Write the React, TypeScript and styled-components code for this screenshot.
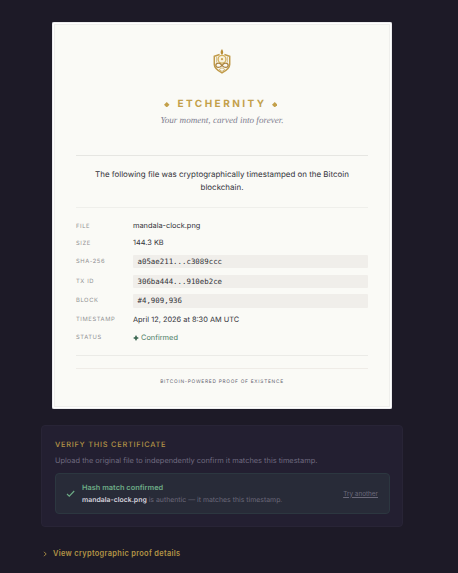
import styled, { createGlobalStyle } from 'styled-components';

const GlobalStyle = createGlobalStyle`
  * {
    box-sizing: border-box;
  }

  body {
    margin: 0;
    background: #1d1a27;
    font-family: 'Inter', sans-serif;
    text-rendering: geometricPrecision;
  }
`;

const Page = styled.main`
  display: flex;
  flex-direction: column;
  align-items: center;
  height: 573px;
  padding: 21.5px 14px 0 0;
  overflow: hidden;
  background: #1d1a27;
`;

const Certificate = styled.article`
  width: 340px;
  height: 387px;
  padding: 2px;
  border-radius: 2px;
  background: #fff;
  box-shadow: inset 0 0 0 0.5px #d9d9dc;
`;

const CertificateInner = styled.div`
  display: flex;
  flex-direction: column;
  height: 100%;
  padding: 0 21px;
  border: 1px solid #efefec;
  background: #fafaf6;
`;

const Header = styled.header`
  display: flex;
  flex-direction: column;
  align-items: center;
  height: 131px;
  padding-top: 24px;
  border-bottom: 1px solid #e6e6e2;
`;

const BrandName = styled.h1`
  display: flex;
  align-items: center;
  gap: 8px;
  height: 14px;
  margin: 23px 0 0;
  padding-right: 2.5px;
  color: #c3a04a;
  font-size: 10px;
  font-weight: 700;
  line-height: 14px;
  letter-spacing: 2.45px;

  span {
    margin-right: -2.5px;
  }

  svg {
    margin-top: 2px;
  }
`;

const Tagline = styled.p`
  margin: 3px 0 0;
  color: #7f7e90;
  font-family: 'Liberation Serif', serif;
  font-size: 9.1px;
  font-style: italic;
  line-height: 12px;
`;

const Statement = styled.p`
  height: 52px;
  margin: 0;
  padding: 12.5px 16px 0;
  border-bottom: 1px solid #efefeb;
  color: #33333a;
  font-size: 7.95px;
  line-height: 13px;
  text-align: center;
`;

const Details = styled.dl`
  height: 148px;
  margin: 0;
  padding-top: 10px;
  border-bottom: 1px solid #ebebe7;
`;

const DetailRow = styled.div<{ $height: number }>`
  display: grid;
  grid-template-columns: 57px 1fr;
  align-items: center;
  height: ${({ $height }) => $height}px;

  dt {
    padding-top: 1px;
    color: #8f8f92;
    font-size: 5.8px;
    line-height: 8px;
    letter-spacing: 0.6px;
  }

  dd {
    margin: 0;
    color: #33333a;
    font-size: 7.4px;
    line-height: 10px;
  }
`;

const Value = styled.span`
  display: block;
`;

const Code = styled.code`
  display: block;
  height: 13.5px;
  padding-left: 4.5px;
  border-radius: 1px;
  background: #f0eeea;
  color: #333338;
  font-family: 'DejaVu Sans Mono', monospace;
  font-size: 7.4px;
  line-height: 13.5px;
`;

const Status = styled.span`
  display: flex;
  align-items: center;
  gap: 2px;
  color: #4f8068;

  svg {
    color: #3f6a55;
  }
`;

const Footer = styled.footer`
  margin-top: 12px;
  padding-top: 9px;
  border-top: 1px solid #efece7;
  color: #62626f;
  font-size: 4.8px;
  line-height: 8px;
  letter-spacing: 0.73px;
  text-align: center;
`;

const VerifyPanel = styled.section`
  width: 362px;
  height: 102px;
  margin-top: 16.5px;
  padding: 14px 12px 0 13px;
  border: 1px solid #282436;
  border-radius: 4px;
  background: #231f31;
`;

const PanelTitle = styled.h2`
  margin: 0;
  color: #b39446;
  font-size: 7.4px;
  font-weight: 500;
  line-height: 10px;
  letter-spacing: 0.75px;
`;

const PanelText = styled.p`
  margin: 6px 0 0;
  color: #706b80;
  font-size: 7.42px;
  line-height: 10px;
`;

const Result = styled.div`
  display: flex;
  align-items: center;
  height: 41px;
  margin-top: 7px;
  padding: 0 11px 0 10px;
  border: 1px solid #2c3740;
  border-radius: 4px;
  background: #282b38;
`;

const ResultText = styled.div`
  flex: 1;
  margin-left: 7px;
  padding-top: 0.5px;
  color: #6b697a;
  font-size: 6.92px;
  line-height: 11px;

  h3 {
    margin: 0;
    color: #6dac86;
    font-size: 7.4px;
    font-weight: 600;
    line-height: 12px;
  }

  p {
    margin: 0;
  }

  strong {
    color: #d4d2dc;
    font-weight: 600;
  }
`;

const RetryButton = styled.button`
  padding: 1px 0 0;
  border: 0;
  background: none;
  color: #6b697a;
  font-family: inherit;
  font-size: 6.4px;
  line-height: 9px;
  text-decoration: underline;
`;

const ProofToggle = styled.button`
  display: flex;
  align-items: center;
  align-self: flex-start;
  gap: 5px;
  margin: 22px 0 0 42px;
  padding: 0;
  border: 0;
  background: none;
  color: #b39446;
  font-family: inherit;
  font-size: 7.4px;
  font-weight: 600;
  line-height: 10px;
  letter-spacing: 0.33px;
`;

const details = [
  { label: 'FILE', value: 'mandala-clock.png', height: 17 },
  { label: 'SIZE', value: '144.3 KB', height: 17 },
  { label: 'SHA-256', value: 'a05ae211...c3089ccc', height: 20, code: true },
  { label: 'TX ID', value: '306ba444...910eb2ce', height: 19.5, code: true },
  { label: 'BLOCK', value: '#4,909,936', height: 19.5, code: true },
  { label: 'TIMESTAMP', value: 'April 12, 2026 at 8:30 AM UTC', height: 18.5 },
];

const Logo = () => (
  <svg width="18" height="25" viewBox="0 0 18 25" fill="none">
    <path d="M9 0C7 2.5 7.2 4.2 9 6c1.6-1.6 1.6-3.6 0-6z" fill="#b88d35" />
    <path d="M6.6 5.5 1.3 7.2v8.2c0 3.6 3.2 6 7.7 8.4 4.5-2.4 7.7-4.8 7.7-8.4V7.2l-5.3-1.7" stroke="#c09a48" strokeWidth="1.5" />
    <path d="M3.7 7.5v6M14.3 7.5v6" stroke="#c9a75c" strokeWidth="0.8" />
    <circle cx="9" cy="10.2" r="3.9" fill="#f9f1dc" stroke="#d2b05b" strokeWidth="1.3" />
    <circle cx="9" cy="10.2" r="1.1" fill="#c8a250" />
    <path d="M9 16.3c-2.2-2.8-5.9-2.8-6.2 0 .3 2.8 4 2.8 6.2 0s5.9-2.8 6.2 0c-.3 2.8-4 2.8-6.2 0z" fill="#fafaf6" stroke="#ac8440" strokeWidth="1.3" />
    <path d="m6 20.6 3-1.8 3 1.8-3 1.8z" stroke="#ceb06c" strokeWidth="0.9" />
  </svg>
);

const Spark = ({ size }: { size: number }) => (
  <svg width={size} height={size} viewBox="0 0 6 6" fill="currentColor">
    <path d="M3 0 4.1 1.9 6 3 4.1 4.1 3 6 1.9 4.1 0 3l1.9-1.1z" />
  </svg>
);

const Diamond = () => (
  <svg width="5.5" height="5.5" viewBox="0 0 5 5" fill="currentColor">
    <path d="M2.5 0 5 2.5 2.5 5 0 2.5z" />
  </svg>
);

const App = () => {
  return (
    <>
      <GlobalStyle />
      <Page>
        <Certificate>
          <CertificateInner>
            <Header>
              <Logo />
              <BrandName>
                <Diamond />
                <span>ETCHERNITY</span>
                <Diamond />
              </BrandName>
              <Tagline>Your moment, carved into forever.</Tagline>
            </Header>
            <Statement>
              The following file was cryptographically timestamped on the Bitcoin blockchain.
            </Statement>
            <Details>
              {details.map(({ label, value, height, code }) => (
                <DetailRow key={label} $height={height}>
                  <dt>{label}</dt>
                  <dd>{code ? <Code>{value}</Code> : <Value>{value}</Value>}</dd>
                </DetailRow>
              ))}
              <DetailRow $height={17}>
                <dt>STATUS</dt>
                <dd>
                  <Status>
                    <Spark size={6} />
                    Confirmed
                  </Status>
                </dd>
              </DetailRow>
            </Details>
            <Footer>BITCOIN-POWERED PROOF OF EXISTENCE</Footer>
          </CertificateInner>
        </Certificate>
        <VerifyPanel>
          <PanelTitle>VERIFY THIS CERTIFICATE</PanelTitle>
          <PanelText>
            Upload the original file to independently confirm it matches this timestamp.
          </PanelText>
          <Result>
            <svg width="9" height="9" viewBox="0 0 9 9" fill="none" stroke="#6dac86" strokeWidth="1.1">
              <path d="m1 5 2.3 2.2L8.2 2" />
            </svg>
            <ResultText>
              <h3>Hash match confirmed</h3>
              <p>
                <strong>mandala-clock.png</strong> is authentic — it matches this timestamp.
              </p>
            </ResultText>
            <RetryButton>Try another</RetryButton>
          </Result>
        </VerifyPanel>
        <ProofToggle>
          <svg width="6" height="6" viewBox="0 0 6 6" fill="none" stroke="currentColor" strokeWidth="0.9">
            <path d="m2 .8 2.2 2.2L2 5.2" />
          </svg>
          View cryptographic proof details
        </ProofToggle>
      </Page>
    </>
  );
};

export default App;
